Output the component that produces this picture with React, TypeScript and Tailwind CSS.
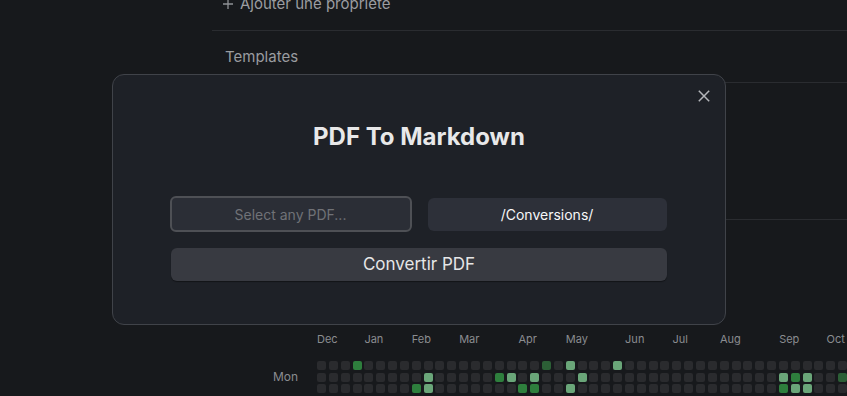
import type React from "react"

const COLS = 46
const ROWS = 7
const PITCH = 11.85

// heatmap levels: d = dark green, l = light green, p = dithered
const LEVELS: Record<number, Record<number, string>> = {
  0: { 3: "d", 19: "p", 21: "l", 25: "l" },
  1: { 9: "l", 15: "d", 16: "l", 18: "l", 22: "l", 39: "l", 40: "d", 41: "l", 44: "p" },
  2: { 8: "d", 9: "l", 17: "d", 18: "d", 21: "l", 39: "d", 40: "l", 41: "l" },
}

const MONTHS: [string, number][] = [
  ["Dec", 0],
  ["Jan", 4],
  ["Feb", 8],
  ["Mar", 12],
  ["Apr", 17],
  ["May", 21],
  ["Jun", 26],
  ["Jul", 30],
  ["Aug", 34],
  ["Sep", 39],
  ["Oct", 43],
]

const cellClass = (level?: string) => {
  if (level === "d") return "bg-[#2e7f3d]"
  if (level === "l") return "bg-[#6aa679]"
  if (level === "p") return "bg-[#2c5f36]"
  return "bg-[#2a2b2e]"
}

const Heatmap: React.FC = () => (
  <div className="flex pl-[273px]">
    <div className="w-[44px] shrink-0 flex flex-col pt-[32px] text-[12px] leading-[12px] text-[#8a8c90]">
      <span>Mon</span>
      <span className="mt-[11.6px]">Wed</span>
    </div>
    <div className="flex flex-col shrink-0">
      <div className="relative h-[26px] mt-[-6px] text-[11px] leading-[12px] text-[#8a8c90]">
        {MONTHS.map(([m, c]) => (
          <span key={m} className="absolute top-[0px]" style={{ left: c * PITCH }}>
            {m}
          </span>
        ))}
      </div>
      <div className="flex flex-col gap-y-[2.7px] mt-[2px]">
        {Array.from({ length: ROWS }).map((_, r) => (
          <div key={r} className="flex gap-x-[2.85px]">
            {Array.from({ length: COLS }).map((_, c) => (
              <div key={c} className={`w-[9px] h-[9px] rounded-[2px] shrink-0 ${cellClass(LEVELS[r]?.[c])}`} />
            ))}
          </div>
        ))}
      </div>
    </div>
  </div>
)

export default function App() {
  return (
    <div
      className="relative w-full h-[396px] overflow-hidden bg-[#17191c]"
      style={{ fontFamily: "Inter, 'Noto Sans', sans-serif" }}
    >
      {/* Background page */}
      <div className="pl-[212px]">
        <div className="flex items-center h-[20px] mt-[-6px] pl-[11px] text-[15px] text-[#9b9da1]">
          <svg width="10" height="10" viewBox="0 0 10 10" className="mr-[7px]">
            <path d="M5 0v10M0 5h10" stroke="#8f9195" strokeWidth="1.3" />
          </svg>
          <span>Ajouter une propriété</span>
        </div>
        <div className="h-px bg-[#2a2c30] mt-[16px]" />
        <div className="pl-[13px] pt-[16px] h-[51px] text-[15px] leading-[20px] text-[#9a9ca0]">Templates</div>
        <div className="h-px bg-[#2a2c30]" />
        <div className="h-[136px]" />
        <div className="h-px bg-[#2a2c30]" />
      </div>

      <div className="mt-[119px]">
        <Heatmap />
      </div>

      {/* Modal */}
      <div className="absolute left-[112px] top-[74px] w-[614px] h-[251px] rounded-[12px] border border-[#404349] bg-[#1e2127] flex flex-col items-center px-[58px] pt-[46px]">
        <button className="absolute top-[15px] right-[15px] text-[#b4b6ba]">
          <svg width="12" height="12" viewBox="0 0 12 12">
            <path d="M0.8 0.8L11.2 11.2M11.2 0.8L0.8 11.2" stroke="currentColor" strokeWidth="1.5" />
          </svg>
        </button>

        <h1 className="text-[24px] leading-[32px] font-bold text-[#e8e8e9]">PDF To Markdown</h1>

        <div className="flex items-center gap-[16px] mt-[43px] ml-[-2px]">
          <div className="w-[242px] h-[36px] rounded-[6px] border-2 border-[#4e5055] bg-[#2b2e36] flex items-center justify-center text-[14px] text-[#707277]">
            Select any PDF...
          </div>
          <div className="w-[239px] h-[33px] rounded-[6px] bg-[#2d3039] flex items-center justify-center text-[14px] text-[#f7f7f8]">
            /Conversions/
          </div>
        </div>

        <button className="w-full h-[33px] mt-[16px] rounded-[6px] bg-[#383a41] shadow-[0_1px_1px_rgba(0,0,0,0.4)] text-[17px] text-[#e6e6e7]">
          Convertir PDF
        </button>
      </div>
    </div>
  )
}
